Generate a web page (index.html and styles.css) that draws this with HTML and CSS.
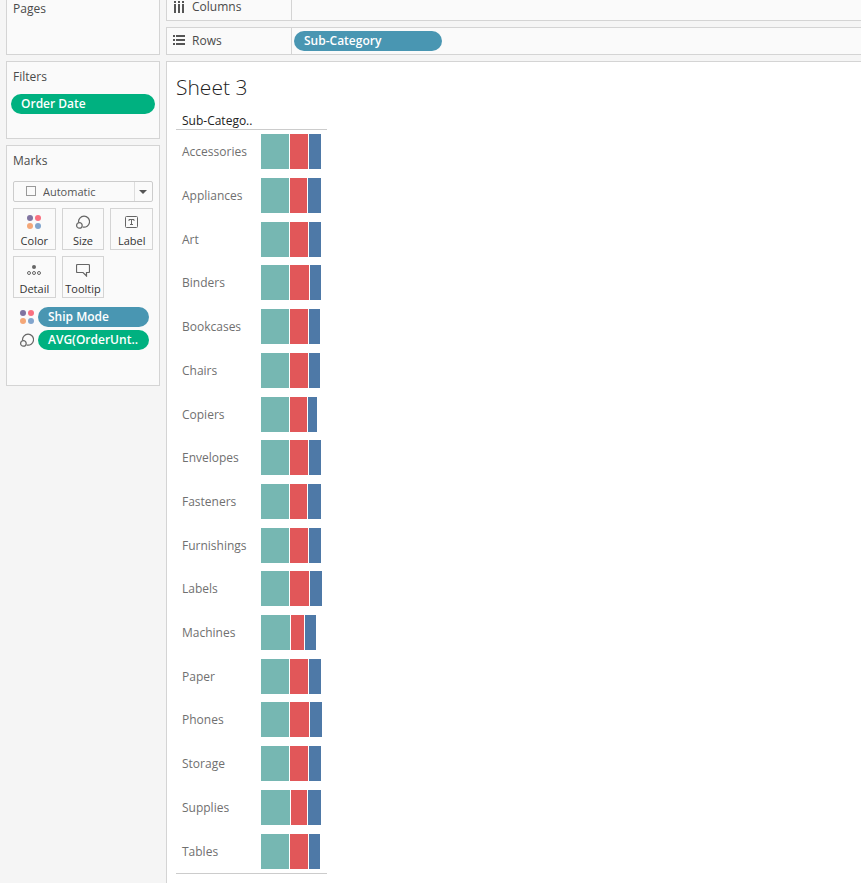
FILE: index.html
```html
<!DOCTYPE html>
<html lang="en">
<head>
<meta charset="utf-8">
<title>Sheet 3</title>
<link rel="stylesheet" href="styles.css">
</head>
<body>
<svg class="defs" aria-hidden="true">
  <symbol id="icon-color" viewBox="0 0 14 14">
    <circle cx="3" cy="3" r="3" fill="#8074a0"/>
    <circle cx="11" cy="3" r="3" fill="#f97080"/>
    <circle cx="3" cy="11" r="3" fill="#f4a778"/>
    <circle cx="11" cy="11" r="3" fill="#82a5cd"/>
  </symbol>
  <symbol id="icon-size" viewBox="0 0 14 14">
    <g fill="none" stroke="#666" stroke-width="1.2">
      <path d="M2.6 7.4A5.5 5.5 0 1 1 6.7 12"/>
      <circle cx="3.4" cy="10.4" r="2.8"/>
    </g>
  </symbol>
</svg>
<div class="workspace">
  <aside class="cards">
    <section class="card pages"><h2>Pages</h2></section>
    <section class="card filters">
      <h2>Filters</h2>
      <button class="pill measure" type="button">Order Date</button>
    </section>
    <section class="card marks">
      <h2>Marks</h2>
      <div class="mark-type">
        <select aria-label="Mark type"><option>Automatic</option></select>
        <span class="square"></span>
        <span class="arrow"></span>
      </div>
      <div class="mark-buttons">
        <button type="button"><svg width="14" height="14"><use href="#icon-color"/></svg>Color</button>
        <button type="button"><svg width="14" height="14"><use href="#icon-size"/></svg>Size</button>
        <button type="button"><svg width="14" height="14" viewBox="0 0 14 14"><rect x=".5" y="1.5" width="12" height="11" rx="1" fill="none" stroke="#666"/><path d="M4 6V4.500h5V6M6.500 4.500v5M5 9.500h3" fill="none" stroke="#666"/></svg>Label</button>
        <button type="button"><svg width="14" height="14" viewBox="0 0 14 14"><circle cx="7" cy="4" r="2" fill="#666"/><g fill="none" stroke="#666"><circle cx="2" cy="10" r="1.5"/><circle cx="7" cy="10" r="1.5"/><circle cx="12" cy="10" r="1.5"/></g></svg>Detail</button>
        <button type="button"><svg width="14" height="14" viewBox="0 0 14 14"><path d="M1.5 1.500h11q1 0 1 1v6q0 1-1 1H10.500v3.500L7 9.500H1.500q-1 0-1-1v-6q0-1 1-1z" fill="none" stroke="#666" stroke-width="1.200"/></svg>Tooltip</button>
      </div>
      <ul class="encodings">
        <li><svg width="14" height="14"><use href="#icon-color"/></svg><button class="pill dimension" type="button">Ship Mode</button></li>
        <li><svg width="14" height="14"><use href="#icon-size"/></svg><button class="pill measure" type="button">AVG(OrderUnt..</button></li>
      </ul>
    </section>
  </aside>
  <main class="view">
    <section class="shelf columns">
      <h2><svg width="12" height="12" viewBox="0 0 12 12"><path d="M1 0h2v2H1zM5 0h2v2H5zM9 0h2v2H9zM1 3h2v9H1zM5 3h2v9H5zM9 3h2v9H9z" fill="#555"/></svg>Columns</h2>
      <div class="drop"></div>
    </section>
    <section class="shelf rows">
      <h2><svg width="12" height="12" viewBox="0 0 12 12"><path d="M0 0h2v2H0zM0 4h2v2H0zM0 8h2v2H0zM3 0h9v2H3zM3 4h9v2H3zM3 8h9v2H3z" fill="#555"/></svg>Rows</h2>
      <div class="drop"><button class="pill dimension" type="button">Sub-Category</button></div>
    </section>
    <section class="sheet">
      <h1>Sheet 3</h1>
      <table class="chart">
        <thead><tr><th scope="col">Sub-Catego..</th><td></td></tr></thead>
        <tbody>
          <tr><th scope="row">Accessories</th><td><div class="bar"><i style="width:28px"></i><i style="width:18px"></i><i style="width:12px"></i></div></td></tr>
          <tr><th scope="row">Appliances</th><td><div class="bar"><i style="width:28px"></i><i style="width:17px"></i><i style="width:13px"></i></div></td></tr>
          <tr><th scope="row">Art</th><td><div class="bar"><i style="width:28px"></i><i style="width:18px"></i><i style="width:12px"></i></div></td></tr>
          <tr><th scope="row">Binders</th><td><div class="bar"><i style="width:28px"></i><i style="width:19px"></i><i style="width:11px"></i></div></td></tr>
          <tr><th scope="row">Bookcases</th><td><div class="bar"><i style="width:28px"></i><i style="width:18px"></i><i style="width:11px"></i></div></td></tr>
          <tr><th scope="row">Chairs</th><td><div class="bar"><i style="width:28px"></i><i style="width:18px"></i><i style="width:11px"></i></div></td></tr>
          <tr><th scope="row">Copiers</th><td><div class="bar"><i style="width:28px"></i><i style="width:17px"></i><i style="width:9px"></i></div></td></tr>
          <tr><th scope="row">Envelopes</th><td><div class="bar"><i style="width:28px"></i><i style="width:18px"></i><i style="width:12px"></i></div></td></tr>
          <tr><th scope="row">Fasteners</th><td><div class="bar"><i style="width:28px"></i><i style="width:17px"></i><i style="width:13px"></i></div></td></tr>
          <tr><th scope="row">Furnishings</th><td><div class="bar"><i style="width:28px"></i><i style="width:18px"></i><i style="width:12px"></i></div></td></tr>
          <tr><th scope="row">Labels</th><td><div class="bar"><i style="width:28px"></i><i style="width:19px"></i><i style="width:12px"></i></div></td></tr>
          <tr><th scope="row">Machines</th><td><div class="bar"><i style="width:29px"></i><i style="width:13px"></i><i style="width:11px"></i></div></td></tr>
          <tr><th scope="row">Paper</th><td><div class="bar"><i style="width:28px"></i><i style="width:18px"></i><i style="width:12px"></i></div></td></tr>
          <tr><th scope="row">Phones</th><td><div class="bar"><i style="width:28px"></i><i style="width:19px"></i><i style="width:12px"></i></div></td></tr>
          <tr><th scope="row">Storage</th><td><div class="bar"><i style="width:28px"></i><i style="width:18px"></i><i style="width:12px"></i></div></td></tr>
          <tr><th scope="row">Supplies</th><td><div class="bar"><i style="width:29px"></i><i style="width:16px"></i><i style="width:13px"></i></div></td></tr>
          <tr><th scope="row">Tables</th><td><div class="bar"><i style="width:28px"></i><i style="width:18px"></i><i style="width:11px"></i></div></td></tr>
        </tbody>
      </table>
    </section>
  </main>
</div>
</body>
</html>
```
FILE: styles.css
```css
* { box-sizing: border-box; }
body {
  margin: 0;
  background: #f5f5f5;
  color: #4a4a4a;
  font: 12px/16px "Open Sans", "Noto Sans", sans-serif;
}
h1, h2, ul { margin: 0; padding: 0; font-weight: 400; }
h2 { font-size: 12px; line-height: 16px; }
button, select { font: inherit; color: inherit; }
svg { flex: none; }
.defs { position: absolute; width: 0; height: 0; }

.workspace { display: flex; gap: 6px; min-height: 100vh; padding-left: 6px; }
.cards { display: flex; flex-direction: column; gap: 6px; flex: none; width: 154px; }
.card { border: 1px solid #d4d4d4; background: #fafafa; padding: 7px 6px; }
.pages { height: 55px; border-top: 0; padding-top: 1px; }
.filters { min-height: 78px; padding: 7px 4px; }
.filters h2 { padding-left: 2px; margin-bottom: 9px; }
.marks { min-height: 241px; }

.pill {
  display: block;
  width: 100%;
  height: 20px;
  padding: 0 10px;
  border: 0;
  border-radius: 10px;
  color: #fff;
  font-weight: 600;
  line-height: 20px;
  text-align: left;
  white-space: nowrap;
}
.measure { background: #00b180; }
.dimension { background: #4996b2; }

.mark-type { position: relative; margin: 12px 0 6px; }
.mark-type select {
  display: block;
  width: 100%;
  height: 21px;
  padding: 0 29px;
  border: 1px solid #ccc;
  border-radius: 2px;
  background: #fafafa;
  color: #555;
  font-size: 11px;
  appearance: none;
}
.square { position: absolute; left: 13px; top: 5px; width: 10px; height: 10px; border: 1px solid #999; pointer-events: none; }
.arrow { position: absolute; right: 1px; top: 1px; width: 18px; height: 19px; border-left: 1px solid #ddd; pointer-events: none; }
.arrow::after { content: ""; position: absolute; left: 4px; top: 8px; border: 4px solid transparent; border-top-color: #555; border-bottom: 0; }

.mark-buttons { display: grid; grid-template-columns: repeat(3, 1fr); gap: 6px; }
.mark-buttons button {
  display: flex;
  flex-direction: column;
  align-items: center;
  gap: 5px;
  height: 42px;
  padding: 6px 0 0;
  border: 1px solid #d4d4d4;
  background: #fafafa;
  color: #333;
  font-size: 11px;
  line-height: 14px;
}
.encodings { display: grid; gap: 3px; margin-top: 9px; padding: 0 4px 0 7px; list-style: none; }
.encodings li { display: flex; align-items: center; gap: 4px; }

.view { display: flex; flex-direction: column; gap: 6px; flex: 1; min-width: 0; }
.shelf { display: flex; border: 1px solid #d4d4d4; border-right: 0; background: #fafafa; }
.shelf h2 { display: flex; align-items: center; gap: 7px; width: 125px; padding-left: 6px; border-right: 1px solid #d4d4d4; }
.columns { height: 21px; border-top: 0; }
.columns h2 { padding-bottom: 6px; line-height: 14px; }
.rows { height: 28px; }
.drop { flex: 1; padding: 3px 2px; }
.drop .pill { width: 148px; }

.sheet { flex: 1; border: 1px solid #d4d4d4; border-width: 1px 0 0 1px; background: #fff; padding: 12px 9px 9px; }
.sheet h1 { font-size: 21px; line-height: 26px; font-weight: 300; color: #222; }
.chart { width: 151px; height: 764px; margin-top: 10px; border-collapse: separate; border-spacing: 0; table-layout: fixed; border-bottom: 1px solid #ccc; }
.chart th, .chart td { padding: 0; text-align: left; vertical-align: middle; }
.chart thead th, .chart thead td { height: 20px; border-bottom: 1px solid #ccc; }
.chart th { width: 85px; padding: 1px 0 0 6px; font-weight: 400; color: #707070; }
.chart thead th { padding-top: 2px; font-weight: 500; color: #222; white-space: nowrap; }
.chart tbody tr { height: 43px; }
.bar { display: flex; gap: 1px; height: 35px; }
.bar i:nth-child(1) { background: #76b7b2; }
.bar i:nth-child(2) { background: #e15759; }
.bar i:nth-child(3) { background: #4e79a7; }
```
